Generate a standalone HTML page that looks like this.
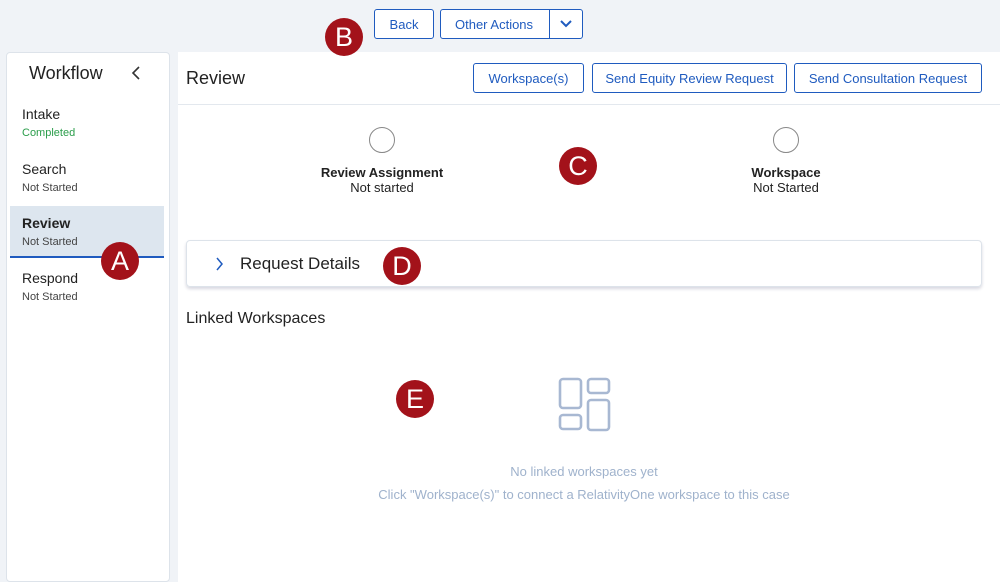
<!DOCTYPE html>
<html><head><style>
*{box-sizing:border-box;margin:0;padding:0}
body{width:1000px;height:573px;background:#f0f3f7;font-family:"Liberation Sans",sans-serif;position:relative;overflow:hidden;color:#222}
.abs{position:absolute}
.btn{position:absolute;border:1px solid #1f5bbf;border-radius:3px;background:#fff;color:#1f5bbf;font-size:13px;display:flex;align-items:center;justify-content:center}
.badge{position:absolute;width:38px;height:38px;border-radius:50%;background:#a3121a;color:#fff;font-size:27px;display:flex;align-items:center;justify-content:center}
.item{position:absolute;left:22px;font-size:14px;color:#222}
.item small{display:block;font-size:11px;color:#444;margin-top:5px}
</style></head><body>
<div class="btn" style="left:374px;top:9px;width:60px;height:30px">Back</div>
<div class="btn" style="left:440px;top:9px;width:143px;height:30px;justify-content:flex-start;padding-left:14px">Other Actions
<div class="abs" style="left:108px;top:0;width:1px;height:28px;background:#1f5bbf"></div>
<svg class="abs" style="left:118px;top:8px" width="14" height="12" viewBox="0 0 14 12"><path d="M2 3l5 5 5-5" fill="none" stroke="#1f5bbf" stroke-width="2"/></svg></div>

<div class="abs" style="left:6px;top:52px;width:164px;height:530px;background:#fff;border:1px solid #dde3ea;border-radius:4px"></div>
<div class="abs" style="left:29px;top:63px;font-size:18px">Workflow</div>
<svg class="abs" style="left:131px;top:66px" width="10" height="14"><path d="M8 1L2 7l6 6" fill="none" stroke="#333" stroke-width="1.6"/></svg>
<div class="item" style="top:106px">Intake<small style="color:#2a9d4a">Completed</small></div>
<div class="item" style="top:161px">Search<small>Not Started</small></div>
<div class="abs" style="left:10px;top:206px;width:154px;height:52px;background:#dde6ef;border-bottom:2px solid #1f5bbf"></div>
<div class="item" style="top:215px;font-weight:bold">Review<small style="font-weight:normal">Not Started</small></div>
<div class="item" style="top:270px">Respond<small>Not Started</small></div>

<div class="abs" style="left:178px;top:52px;width:822px;height:530px;background:#fff"></div>
<div class="abs" style="left:178px;top:104px;width:822px;height:1px;background:#e3e8ee"></div>
<div class="abs" style="left:186px;top:68px;font-size:18px">Review</div>
<div class="btn" style="left:473px;top:63px;width:111px;height:30px">Workspace(s)</div>
<div class="btn" style="left:592px;top:63px;width:195px;height:30px">Send Equity Review Request</div>
<div class="btn" style="left:794px;top:63px;width:188px;height:30px">Send Consultation Request</div>

<div class="abs" style="left:369px;top:127px;width:26px;height:26px;border:1px solid #888;border-radius:50%"></div>
<div class="abs" style="left:282px;top:165px;width:200px;text-align:center;font-size:13px;line-height:15px"><b>Review Assignment</b><br>Not started</div>
<div class="abs" style="left:773px;top:127px;width:26px;height:26px;border:1px solid #888;border-radius:50%"></div>
<div class="abs" style="left:686px;top:165px;width:200px;text-align:center;font-size:13px;line-height:15px"><b>Workspace</b><br>Not Started</div>

<div class="abs" style="left:186px;top:240px;width:796px;height:47px;border:1px solid #dde3ea;border-radius:4px;box-shadow:0 2px 3px #d8d8e0"></div>
<svg class="abs" style="left:215px;top:257px" width="10" height="14"><path d="M2 1l5 6-5 6" fill="none" stroke="#1f5bbf" stroke-width="1.5"/></svg>
<div class="abs" style="left:240px;top:254px;font-size:17px">Request Details</div>
<div class="abs" style="left:186px;top:310px;font-size:16px">Linked Workspaces</div>

<svg class="abs" style="left:557px;top:376px" width="56" height="56"><g fill="none" stroke="#a8b8d2" stroke-width="2.6"><rect x="3" y="3" width="21" height="29" rx="3"/><rect x="31" y="3" width="21" height="14" rx="3"/><rect x="3" y="39" width="21" height="14" rx="3"/><rect x="31" y="24" width="21" height="30" rx="3"/></g></svg>
<div class="abs" style="left:384px;top:464px;width:400px;text-align:center;font-size:13px;color:#9fb2cc">No linked workspaces yet</div>
<div class="abs" style="left:334px;top:487px;width:500px;text-align:center;font-size:13px;color:#9fb2cc">Click "Workspace(s)" to connect a RelativityOne workspace to this case</div>

<div class="badge" style="left:325px;top:18px">B</div>
<div class="badge" style="left:101px;top:242px">A</div>
<div class="badge" style="left:559px;top:147px">C</div>
<div class="badge" style="left:383px;top:247px">D</div>
<div class="badge" style="left:396px;top:380px">E</div>
</body></html>
